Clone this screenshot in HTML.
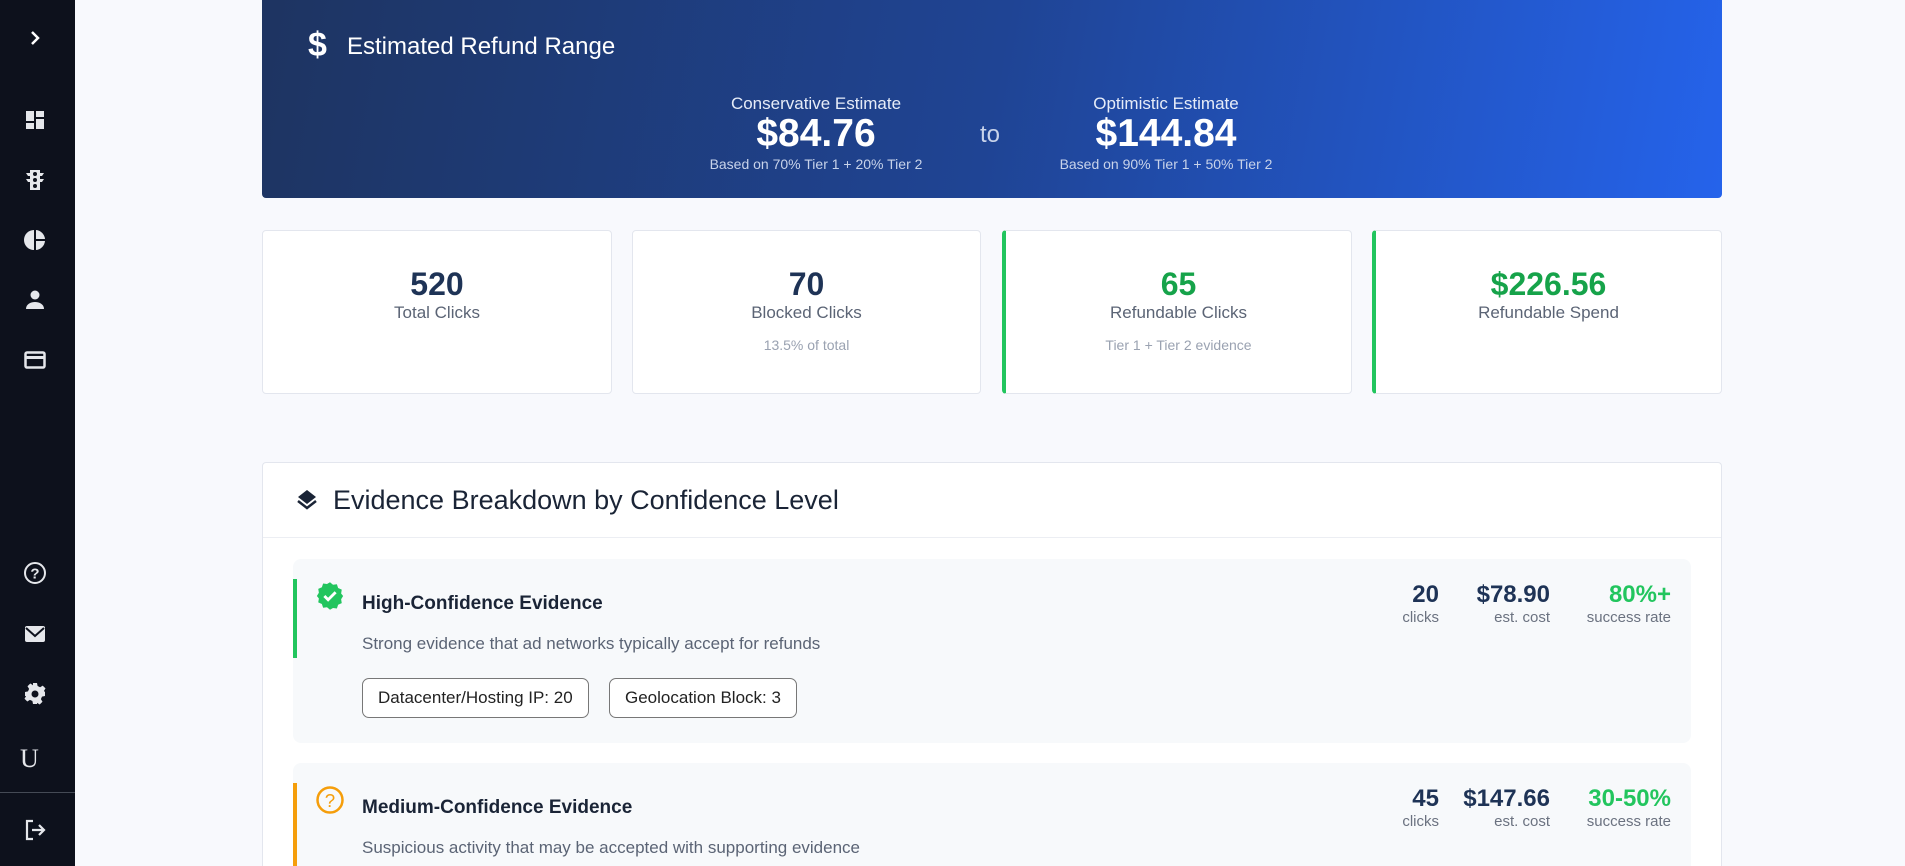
<!DOCTYPE html>
<html><head><meta charset="utf-8"><style>
*{box-sizing:border-box;margin:0;padding:0}
html,body{width:1905px;height:866px;overflow:hidden}
body{background:#f8f9fd;font-family:"Liberation Sans",sans-serif}
.wrap{position:relative;width:1905px;height:866px;overflow:hidden;background:#f8f9fd}
.sb{position:absolute;left:0;top:0;width:75px;height:866px;background:#0d111c}
.ic{position:absolute;left:23px;width:24px;height:24px}
.banner{position:absolute;left:262px;top:0;width:1460px;height:198px;border-radius:0 0 4px 4px;background:linear-gradient(100deg,#1e3461 0%,#1f4494 50%,#2563eb 100%);color:#fff}
.est{position:absolute;top:94px;text-align:center;width:300px}
.est .l{font-size:17px;color:#e6ecf8}
.est .v{font-size:39px;font-weight:bold;line-height:40px}
.est .s{font-size:14px;color:#c8d3ea;margin-top:2px}
.card{position:absolute;top:230px;height:164px;background:#fff;border:1px solid #e3e6ee;border-radius:4px;text-align:center}
.card .n{margin-top:34px;font-size:32px;font-weight:bold;color:#1e3356;line-height:38px}
.card .t{font-size:17px;color:#5b6475;line-height:20px}
.card .s{font-size:14px;color:#9aa2b1;margin-top:14px}
.g{border-left:4px solid #22c55e}
.g .n{color:#16a34a}
.panel{position:absolute;left:262px;top:462px;width:1460px;height:404px;background:#fff;border:1px solid #e3e6ee;border-bottom:none;border-radius:4px 4px 0 0;overflow:hidden}
.ph{height:75px;border-bottom:1px solid #eceef3;position:relative}
.ph span{position:absolute;left:70px;top:22px;font-size:27px;color:#1a2436}
.tier{position:absolute;left:30px;width:1398px;background:#f7f9fb;border-radius:8px}
.bar{position:absolute;left:0;width:4px}
.tt{position:absolute;left:69px;font-size:19px;font-weight:bold;color:#1a2436}
.td{position:absolute;left:69px;font-size:17px;color:#5b6475}
.chip{position:absolute;top:119px;height:40px;border:1px solid #777;border-radius:7px;font-size:17px;color:#222;line-height:38px;padding:0 15px;background:#fff}
.st{position:absolute;text-align:right}
.st .v{font-size:24px;font-weight:bold;color:#1e3356;line-height:28px}
.st .k{font-size:15px;color:#6b7280}
</style></head><body><div class="wrap">
<div class="sb">
<svg class="ic" style="top:26px" viewBox="0 0 24 24"><path d="M9 6l6 6-6 6" stroke="#fff" stroke-width="2.5" fill="none"/></svg>
<svg class="ic" style="top:108px" viewBox="0 0 24 24" fill="#e5e7eb"><path d="M3 3h8v10H3zM13 3h8v6h-8zM13 11h8v10h-8zM3 15h8v6H3z"/></svg>
<svg class="ic" style="top:168px" viewBox="0 0 24 24" fill="#e5e7eb"><path d="M7 2h10v20H7z M3 5h4l0 3H5z M21 5h-4v3h2z M3 11h4v3H5z M21 11h-4v3h2z"/><circle cx="12" cy="6" r="2" fill="#0d111c"/><circle cx="12" cy="12" r="2" fill="#0d111c"/><circle cx="12" cy="18" r="2" fill="#0d111c"/></svg>
<svg class="ic" style="top:228px" viewBox="0 0 24 24" fill="#e5e7eb"><path d="M11 2a10 10 0 0 0 0 20z M13 2a10 10 0 0 1 9 9h-9z M13 13h9a10 10 0 0 1-9 9z"/></svg>
<svg class="ic" style="top:288px" viewBox="0 0 24 24" fill="#e5e7eb"><circle cx="12" cy="7" r="4.5"/><path d="M3 21c0-5 5-7 9-7s9 2 9 7z"/></svg>
<svg class="ic" style="top:348px" viewBox="0 0 24 24"><rect x="2.5" y="4.5" width="19" height="15" rx="1.5" stroke="#e5e7eb" stroke-width="2.5" fill="none"/><rect x="2" y="8" width="20" height="3" fill="#e5e7eb"/></svg>
<svg class="ic" style="top:561px" viewBox="0 0 24 24"><circle cx="12" cy="12" r="10" stroke="#e5e7eb" stroke-width="2" fill="none"/><text x="12" y="17.5" font-size="15" font-weight="bold" fill="#e5e7eb" text-anchor="middle" font-family="Liberation Sans">?</text></svg>
<svg class="ic" style="top:622px" viewBox="0 0 24 24"><rect x="2" y="4" width="20" height="16" rx="2" fill="#e5e7eb"/><path d="M3 6l9 8 9-8" stroke="#0d111c" stroke-width="2" fill="none"/></svg>
<svg class="ic" style="top:682px" viewBox="0 0 24 24" fill="#e5e7eb"><path d="M10 1h4l.6 3 2.5 1.2 2.6-1.6 2.8 2.8-1.6 2.6L22 10v4l-3 .6-1.1 2.5 1.6 2.6-2.8 2.8-2.6-1.6L14 22h-4l-.6-3-2.5-1.1-2.6 1.6-2.8-2.8 1.6-2.6L2 14v-4l3-.6 1.1-2.5-1.6-2.6 2.8-2.8 2.6 1.6L10 4z"/><circle cx="12" cy="12" r="3.5" fill="#0d111c"/></svg>
<div style="position:absolute;left:20px;top:744px;font-family:'Liberation Serif',serif;font-size:26px;color:#e5e7eb">U</div>
<div style="position:absolute;left:0;top:792px;width:75px;height:1px;background:#444a55"></div>
<svg class="ic" style="top:818px" viewBox="0 0 24 24" fill="none" stroke="#e5e7eb" stroke-width="2.2"><path d="M10 3H4v18h6M9 12h12M16 7l5 5-5 5"/></svg>
</div>

<div class="banner">
<div style="position:absolute;left:46px;top:26px;font-size:34px;font-weight:bold">$</div>
<div style="position:absolute;left:85px;top:33px;font-size:24px">Estimated Refund Range</div>
<div class="est" style="left:404px"><div class="l">Conservative Estimate</div><div class="v">$84.76</div><div class="s">Based on 70% Tier 1 + 20% Tier 2</div></div>
<div style="position:absolute;left:718px;top:121px;font-size:24px;color:#c8d3ea">to</div>
<div class="est" style="left:754px"><div class="l">Optimistic Estimate</div><div class="v">$144.84</div><div class="s">Based on 90% Tier 1 + 50% Tier 2</div></div>
</div>

<div class="card" style="left:262px;width:350px"><div class="n">520</div><div class="t">Total Clicks</div></div>
<div class="card" style="left:632px;width:349px"><div class="n">70</div><div class="t">Blocked Clicks</div><div class="s">13.5% of total</div></div>
<div class="card g" style="left:1002px;width:350px"><div class="n">65</div><div class="t">Refundable Clicks</div><div class="s">Tier 1 + Tier 2 evidence</div></div>
<div class="card g" style="left:1372px;width:350px"><div class="n">$226.56</div><div class="t">Refundable Spend</div></div>

<div class="panel">
<div class="ph">
<svg style="position:absolute;left:32px;top:25px" width="24" height="24" viewBox="0 0 24 24" fill="#1a2436"><path d="M12 2l9 7-9 7-9-7z"/><path d="M3 13l9 7 9-7" stroke="#1a2436" stroke-width="2.5" fill="none"/></svg>
<span>Evidence Breakdown by Confidence Level</span></div>
<div class="tier" style="top:96px;height:184px">
<div class="bar" style="top:20px;height:79px;background:#22c55e"></div>
<svg style="position:absolute;left:22px;top:22px" width="30" height="30" viewBox="0 0 24 24"><path fill="#22c55e" d="M12 1l2.4 2 3.1-.4 1 3 2.9 1.3-.5 3.1L22.5 12l-1.6 2.6.5 3.1-2.9 1.3-1 3-3.1-.4L12 23l-2.4-2-3.1.4-1-3-2.9-1.3.5-3.1L1.5 12l1.6-2.6-.5-3.1 2.9-1.3 1-3 3.1.4z"/><path d="M7.5 12l3 3 6-6" stroke="#fff" stroke-width="2.3" fill="none"/></svg>
<div class="tt" style="top:34px">High-Confidence Evidence</div>
<div class="td" style="top:75px">Strong evidence that ad networks typically accept for refunds</div>
<div class="chip" style="left:69px">Datacenter/Hosting IP: 20</div>
<div class="chip" style="left:316px">Geolocation Block: 3</div>
<div class="st" style="right:252px;top:22px"><div class="v">20</div><div class="k">clicks</div></div>
<div class="st" style="right:141px;top:22px"><div class="v">$78.90</div><div class="k">est. cost</div></div>
<div class="st" style="right:20px;top:22px"><div class="v" style="color:#22c55e">80%+</div><div class="k">success rate</div></div>
</div>
<div class="tier" style="top:300px;height:104px;border-radius:8px 8px 0 0">
<div class="bar" style="top:20px;height:84px;background:#f59e0b"></div>
<svg style="position:absolute;left:22px;top:22px" width="30" height="30" viewBox="0 0 24 24"><circle cx="12" cy="12" r="10" stroke="#f59e0b" stroke-width="2" fill="none"/><text x="12" y="17.5" font-size="15" fill="#f59e0b" text-anchor="middle" font-family="Liberation Sans">?</text></svg>
<div class="tt" style="top:34px">Medium-Confidence Evidence</div>
<div class="td" style="top:75px">Suspicious activity that may be accepted with supporting evidence</div>
<div class="st" style="right:252px;top:22px"><div class="v">45</div><div class="k">clicks</div></div>
<div class="st" style="right:141px;top:22px"><div class="v">$147.66</div><div class="k">est. cost</div></div>
<div class="st" style="right:20px;top:22px"><div class="v" style="color:#22c55e">30-50%</div><div class="k">success rate</div></div>
</div>
</div>
</div></body></html>
